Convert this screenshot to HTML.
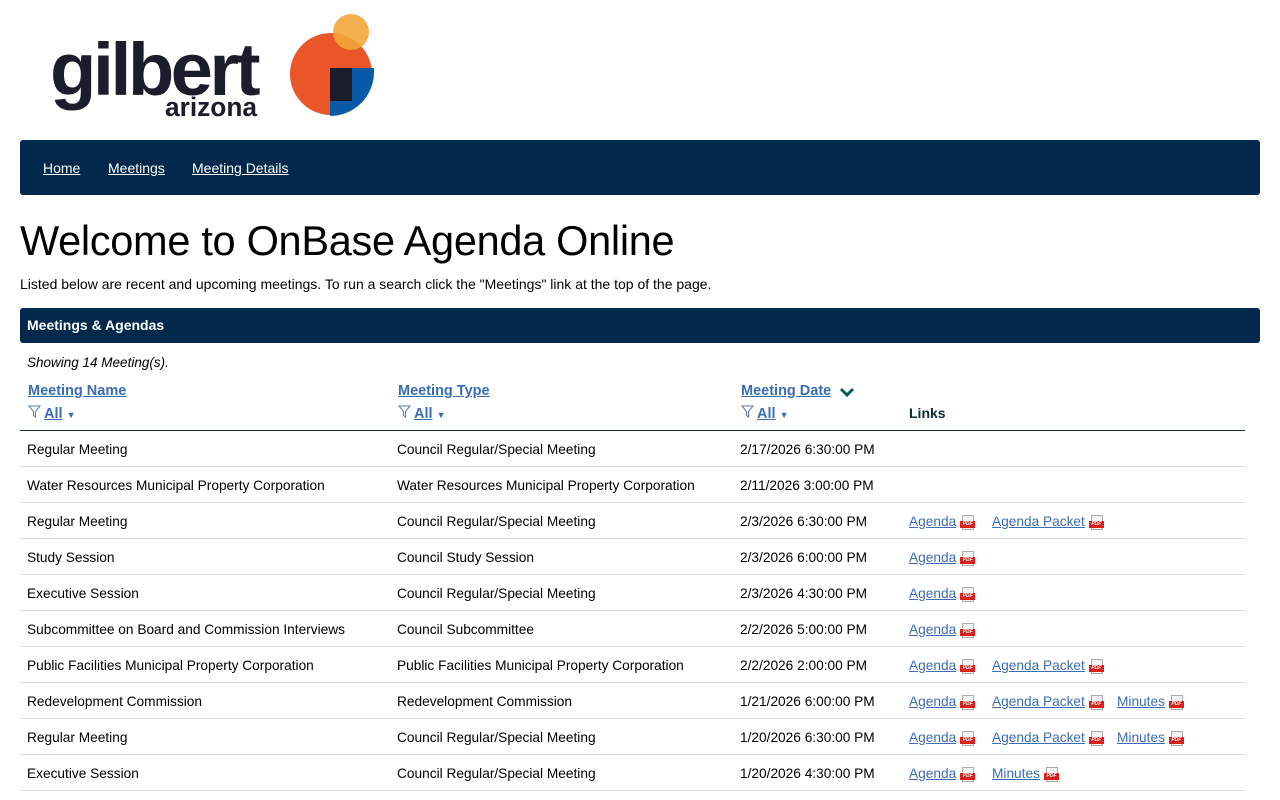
<!DOCTYPE html>
<html><head><meta charset="utf-8"><style>
body{margin:0;background:#fff;font-family:"Liberation Sans",Tahoma,sans-serif;color:#000;width:1280px;height:800px;overflow:hidden;position:relative}
.nav{position:absolute;left:20px;top:140px;width:1240px;height:55px;background:#00294b;border-radius:3px}
.nav a{position:absolute;top:20px;color:#fff;font-size:14px;text-decoration:underline}
h1{position:absolute;left:20px;top:217px;margin:0;font-weight:normal;font-size:41.5px;letter-spacing:-0.3px}
.intro{position:absolute;left:20px;top:276px;font-size:14px}
.bar{position:absolute;left:20px;top:308px;width:1240px;height:35px;background:#00294b;border-radius:3px;color:#fff;font-weight:bold;font-size:14px;line-height:35px;text-indent:7px}
.show{position:absolute;left:27px;top:355px;font-size:13.5px;font-style:italic}
.hd{position:absolute;font-size:14.5px;font-weight:bold;color:#3a6cb4;text-decoration:underline}
.fl{position:absolute;font-size:14.5px;font-weight:bold;color:#3a6cb4}
.fl u{margin-left:3px}
.links{position:absolute;left:909px;top:405px;font-size:14px;font-weight:bold;color:#0a2a3a}
.hl{position:absolute;left:20px;top:430px;width:1225px;height:1px;background:#1a2a3a}
.row{position:absolute;left:20px;width:1225px;height:35px;border-bottom:1px solid #ddd;font-size:13.7px}
.row span{position:absolute;top:11px;white-space:nowrap}
.row a{color:#3a6cb4;text-decoration:underline}
.pdf{display:inline-block;width:15px;height:14px;vertical-align:-3px;margin-left:4px;position:relative}
.pdf:before{content:"";position:absolute;left:2px;top:0;width:10px;height:13px;border:1px solid #aaa;background:#f4f4f4}
.pdf:after{content:"PDF";position:absolute;left:0;top:6px;width:15px;height:7px;background:#d8201c;color:#fff;font-size:5px;line-height:7px;font-weight:bold;text-align:center}
</style></head><body>
<svg style="position:absolute;left:40px;top:10px" width="350" height="115">
<text x="10" y="85" font-family="Liberation Sans" font-weight="bold" font-size="74" fill="#1b1c2c" letter-spacing="-3.5" textLength="207" lengthAdjust="spacingAndGlyphs">gilbert</text>
<text x="125" y="106" font-family="Liberation Sans" font-weight="bold" font-size="27" fill="#1b1c2c" textLength="92" lengthAdjust="spacingAndGlyphs">arizona</text>
<circle cx="291" cy="64" r="41" fill="#ea5628"/>
<path d="M290 58 H334 V62 A44 44 0 0 1 290 106 Z" fill="#0a5aa8"/>
<rect x="290" y="58" width="22" height="33" fill="#1b1c2c"/>
<circle cx="311" cy="22" r="18" fill="#f2a53a" opacity=".9"/>
</svg>
<div class="nav"><a style="left:23px">Home</a><a style="left:88px">Meetings</a><a style="left:172px">Meeting Details</a></div>
<h1>Welcome to OnBase Agenda Online</h1>
<div class="intro">Listed below are recent and upcoming meetings. To run a search click the "Meetings" link at the top of the page.</div>
<div class="bar">Meetings &amp; Agendas</div>
<div class="show">Showing 14 Meeting(s).</div>
<div class="hd" style="left:28px;top:383px">Meeting Name</div>
<div class="hd" style="left:398px;top:383px">Meeting Type</div>
<div class="hd" style="left:741px;top:383px">Meeting Date</div>
<svg style="position:absolute;left:839px;top:386px" width="16" height="12"><path d="M2 3 L8 9 L14 3" stroke="#0a5a5a" stroke-width="3" fill="none"/></svg>
<div class="fl" style="left:28px;top:405px"><svg width="13" height="13" viewBox="0 0 13 13"><path d="M1 1 H12 L7.5 6.5 V12 L5.5 10.5 V6.5 Z" fill="none" stroke="#5a7ab4"/></svg><u>All</u> <span style="font-size:9px">▼</span></div>
<div class="fl" style="left:398px;top:405px"><svg width="13" height="13" viewBox="0 0 13 13"><path d="M1 1 H12 L7.5 6.5 V12 L5.5 10.5 V6.5 Z" fill="none" stroke="#5a7ab4"/></svg><u>All</u> <span style="font-size:9px">▼</span></div>
<div class="fl" style="left:741px;top:405px"><svg width="13" height="13" viewBox="0 0 13 13"><path d="M1 1 H12 L7.5 6.5 V12 L5.5 10.5 V6.5 Z" fill="none" stroke="#5a7ab4"/></svg><u>All</u> <span style="font-size:9px">▼</span></div>
<div class="links">Links</div>
<div class="hl"></div>
<div class="row" style="top:431px"><span style="left:7px">Regular Meeting</span><span style="left:377px">Council Regular/Special Meeting</span><span style="left:720px">2/17/2026 6:30:00 PM</span></div>
<div class="row" style="top:467px"><span style="left:7px">Water Resources Municipal Property Corporation</span><span style="left:377px">Water Resources Municipal Property Corporation</span><span style="left:720px">2/11/2026 3:00:00 PM</span></div>
<div class="row" style="top:503px"><span style="left:7px">Regular Meeting</span><span style="left:377px">Council Regular/Special Meeting</span><span style="left:720px">2/3/2026 6:30:00 PM</span><span style="left:889px"><a>Agenda</a><i class="pdf"></i></span><span style="left:972px"><a>Agenda Packet</a><i class="pdf"></i></span></div>
<div class="row" style="top:539px"><span style="left:7px">Study Session</span><span style="left:377px">Council Study Session</span><span style="left:720px">2/3/2026 6:00:00 PM</span><span style="left:889px"><a>Agenda</a><i class="pdf"></i></span></div>
<div class="row" style="top:575px"><span style="left:7px">Executive Session</span><span style="left:377px">Council Regular/Special Meeting</span><span style="left:720px">2/3/2026 4:30:00 PM</span><span style="left:889px"><a>Agenda</a><i class="pdf"></i></span></div>
<div class="row" style="top:611px"><span style="left:7px">Subcommittee on Board and Commission Interviews</span><span style="left:377px">Council Subcommittee</span><span style="left:720px">2/2/2026 5:00:00 PM</span><span style="left:889px"><a>Agenda</a><i class="pdf"></i></span></div>
<div class="row" style="top:647px"><span style="left:7px">Public Facilities Municipal Property Corporation</span><span style="left:377px">Public Facilities Municipal Property Corporation</span><span style="left:720px">2/2/2026 2:00:00 PM</span><span style="left:889px"><a>Agenda</a><i class="pdf"></i></span><span style="left:972px"><a>Agenda Packet</a><i class="pdf"></i></span></div>
<div class="row" style="top:683px"><span style="left:7px">Redevelopment Commission</span><span style="left:377px">Redevelopment Commission</span><span style="left:720px">1/21/2026 6:00:00 PM</span><span style="left:889px"><a>Agenda</a><i class="pdf"></i></span><span style="left:972px"><a>Agenda Packet</a><i class="pdf"></i></span><span style="left:1097px"><a>Minutes</a><i class="pdf"></i></span></div>
<div class="row" style="top:719px"><span style="left:7px">Regular Meeting</span><span style="left:377px">Council Regular/Special Meeting</span><span style="left:720px">1/20/2026 6:30:00 PM</span><span style="left:889px"><a>Agenda</a><i class="pdf"></i></span><span style="left:972px"><a>Agenda Packet</a><i class="pdf"></i></span><span style="left:1097px"><a>Minutes</a><i class="pdf"></i></span></div>
<div class="row" style="top:755px"><span style="left:7px">Executive Session</span><span style="left:377px">Council Regular/Special Meeting</span><span style="left:720px">1/20/2026 4:30:00 PM</span><span style="left:889px"><a>Agenda</a><i class="pdf"></i></span><span style="left:972px"><a>Minutes</a><i class="pdf"></i></span></div>
</body></html>
